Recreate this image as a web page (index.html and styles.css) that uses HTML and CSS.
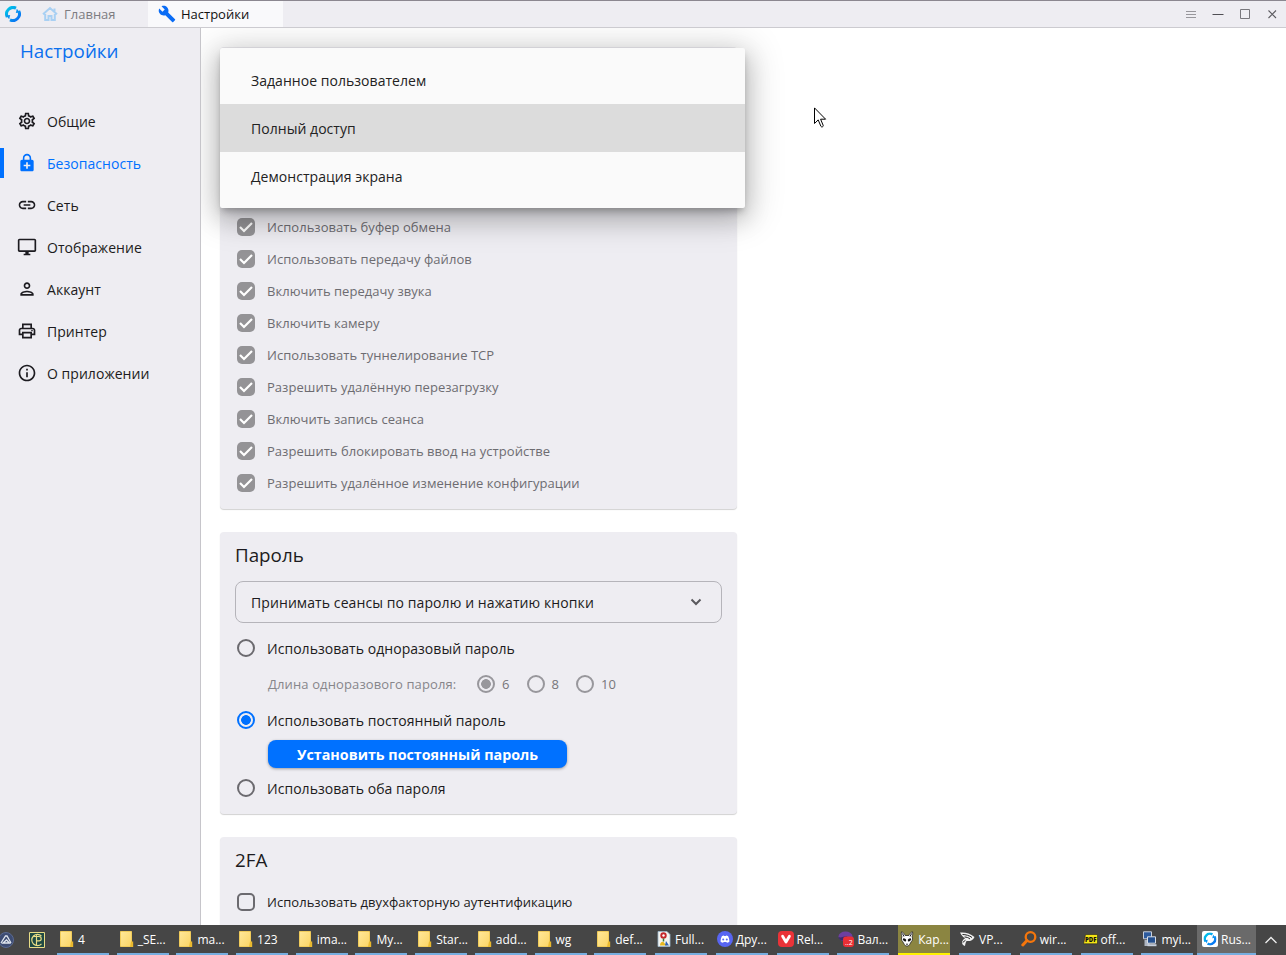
FILE: index.html
```
<!DOCTYPE html>
<html lang="ru">
<head>
    <meta charset="UTF-8">
    <meta name="viewport" content="width=device-width, initial-scale=1.0">
    <title>Настройки</title>
    <link rel="stylesheet" href="styles.css">
</head>
<body>
    <svg class="defs">
        <defs>
            <linearGradient id="logoFill" x1="0" y1="0" x2="1" y2="1">
                <stop offset="0" stop-color="#00c8e8"/>
                <stop offset="1" stop-color="#0a6cf5"/>
            </linearGradient>
            <linearGradient id="folderFill" x1="0" y1="0" x2="1" y2="1">
                <stop offset="0" stop-color="#ffe89a"/>
                <stop offset="1" stop-color="#fbd565"/>
            </linearGradient>
            <symbol id="logo" viewBox="0 0 16 16">
                <path d="M11 2.200A6.500 6.500 0 0 0 2.300 11M5 13.800A6.500 6.500 0 0 0 13.700 5" fill="none" stroke="url(#logoFill)" stroke-width="3"/>
                <path d="M1 9.500l4.200-.6-1 4.300zM15 6.500l-4.200.6 1-4.300z" fill="#0c94f2"/>
            </symbol>
            <symbol id="folder" viewBox="0 0 14 16">
                <path d="M.5.5h11v15H.5z" fill="url(#folderFill)" stroke="#f0cb5a"/>
                <path d="M11 10.500h2.200V16H10z" fill="#e9b92f"/>
            </symbol>
            <symbol id="check" viewBox="0 0 18 18">
                <path d="M3 9l4 4 8-8" fill="none" stroke="#fff" stroke-width="2.200"/>
            </symbol>
        </defs>
    </svg>

    <div class="titlebar">
        <svg class="app-logo"><use href="#logo"/></svg>
        <div class="tab tab-home">
            <svg viewBox="0 0 16 16" width="16" height="16"><path d="M1 8.300L8 2l7 6.300M12.500 2.500V6M3.200 8v6h3.300v-4h3v4h3.300V8" fill="none" stroke="#a9d0f3" stroke-width="2"/></svg>
            <span>Главная</span>
        </div>
        <div class="tab tab-active">
            <svg viewBox="0 0 24 24" width="18" height="18"><path fill="#0a6cf5" d="M22.7 19l-9.1-9.1c.9-2.3.4-5-1.5-6.9-2-2-5-2.4-7.4-1.3L9 6 6 9 1.6 4.7C.4 7.1.9 10.1 2.9 12.1c1.9 1.9 4.6 2.4 6.9 1.5l9.1 9.1c.4.4 1 .4 1.4 0l2.3-2.3c.5-.4.5-1.1.1-1.4z"/></svg>
            <span>Настройки</span>
        </div>
        <div class="window-buttons">
            <svg viewBox="0 0 12 12"><path d="M1 3.500h10M1 6.500h10M1 9.500h10" stroke="#98979c"/></svg>
            <svg viewBox="0 0 12 12"><path d="M.5 6.500h11" stroke="#504f54"/></svg>
            <svg viewBox="0 0 12 12"><path d="M1.500 1.500h9v9h-9z" fill="none" stroke="#78777c"/></svg>
            <svg viewBox="0 0 12 12"><path d="M2.500 2.500l7.500 7.500M10 2.500L2.500 10" stroke="#5c5b60" stroke-width="1.100"/></svg>
        </div>
    </div>

    <div class="window">
        <div class="sidebar">
            <h1>Настройки</h1>
            <div class="nav">
                <div class="nav-item">
                    <svg viewBox="0 0 24 24"><path d="M19.43 12.98c.04-.32.07-.64.07-.98 0-.34-.03-.66-.07-.98l2.11-1.65c.19-.15.24-.42.12-.64l-2-3.46c-.09-.16-.26-.25-.44-.25-.06 0-.12.01-.17.03l-2.49 1c-.52-.4-1.08-.73-1.69-.98l-.38-2.65C14.46 2.18 14.25 2 14 2h-4c-.25 0-.46.18-.49.42l-.38 2.65c-.61.25-1.17.59-1.69.98l-2.49-1c-.06-.02-.12-.03-.18-.03-.17 0-.34.09-.43.25l-2 3.46c-.13.22-.07.49.12.64l2.11 1.65c-.04.32-.07.65-.07.98 0 .33.03.66.07.98l-2.11 1.65c-.19.15-.24.42-.12.64l2 3.46c.09.16.26.25.44.25.06 0 .12-.01.17-.03l2.49-1c.52.4 1.08.73 1.69.98l.38 2.65c.03.24.24.42.49.42h4c.25 0 .46-.18.49-.42l.38-2.65c.61-.25 1.17-.59 1.69-.98l2.49 1c.06.02.12.03.18.03.17 0 .34-.09.43-.25l2-3.46c.12-.22.07-.49-.12-.64l-2.11-1.65zm-1.98-1.71c.04.31.05.52.05.73 0 .21-.02.43-.05.73l-.14 1.13.89.7 1.08.84-.7 1.21-1.27-.51-1.04-.42-.9.68c-.43.32-.84.56-1.25.73l-1.06.43-.16 1.13-.2 1.35h-1.4l-.19-1.35-.16-1.13-1.06-.43c-.43-.18-.83-.41-1.23-.71l-.91-.7-1.06.43-1.27.51-.7-1.21 1.08-.84.89-.7-.14-1.13c-.03-.31-.05-.54-.05-.74s.02-.43.05-.73l.14-1.13-.89-.7-1.08-.84.7-1.21 1.27.51 1.04.42.9-.68c.43-.32.84-.56 1.25-.73l1.06-.43.16-1.13.2-1.35h1.39l.19 1.35.16 1.13 1.06.43c.43.18.83.41 1.23.71l.91.7 1.06-.43 1.27-.51.7 1.21-1.07.85-.89.7.14 1.13zM12 8c-2.21 0-4 1.79-4 4s1.79 4 4 4 4-1.79 4-4-1.79-4-4-4zm0 6c-1.1 0-2-.9-2-2s.9-2 2-2 2 .9 2 2-.9 2-2 2z"/></svg>
                    <span>Общие</span>
                </div>
                <div class="nav-item selected">
                    <svg viewBox="0 0 24 24"><path d="M18 8h-1V6c0-2.76-2.24-5-5-5S7 3.24 7 6v2H6c-1.1 0-2 .9-2 2v10c0 1.1.9 2 2 2h12c1.1 0 2-.9 2-2V10c0-1.1-.9-2-2-2zM8.9 6c0-1.71 1.39-3.1 3.1-3.1s3.1 1.39 3.1 3.1v2H8.9V6zM16 16h-3v3h-2v-3H8v-2h3v-3h2v3h3v2z"/></svg>
                    <span>Безопасность</span>
                </div>
                <div class="nav-item">
                    <svg viewBox="0 0 24 24"><path d="M3.9 12c0-1.71 1.39-3.1 3.1-3.1h4V7H7c-2.76 0-5 2.24-5 5s2.24 5 5 5h4v-1.9H7c-1.71 0-3.1-1.39-3.1-3.1zM8 13h8v-2H8v2zm9-6h-4v1.9h4c1.71 0 3.1 1.39 3.1 3.1s-1.39 3.1-3.1 3.1h-4V17h4c2.76 0 5-2.24 5-5s-2.24-5-5-5z"/></svg>
                    <span>Сеть</span>
                </div>
                <div class="nav-item">
                    <svg viewBox="0 0 24 24"><path d="M21 2H3c-1.1 0-2 .9-2 2v12c0 1.1.9 2 2 2h7v2H8v2h8v-2h-2v-2h7c1.1 0 2-.9 2-2V4c0-1.1-.9-2-2-2zm0 14H3V4h18v12z"/></svg>
                    <span>Отображение</span>
                </div>
                <div class="nav-item">
                    <svg viewBox="0 0 24 24"><path d="M12 6c1.1 0 2 .9 2 2s-.9 2-2 2-2-.9-2-2 .9-2 2-2m0 10c2.7 0 5.8 1.29 6 2H6c.23-.72 3.31-2 6-2m0-12C9.79 4 8 5.79 8 8s1.79 4 4 4 4-1.79 4-4-1.79-4-4-4zm0 10c-2.67 0-8 1.34-8 4v2h16v-2c0-2.66-5.33-4-8-4z"/></svg>
                    <span>Аккаунт</span>
                </div>
                <div class="nav-item">
                    <svg viewBox="0 0 24 24"><path d="M19 8h-1V3H6v5H5c-1.66 0-3 1.34-3 3v6h4v4h12v-4h4v-6c0-1.66-1.34-3-3-3zM8 5h8v3H8V5zm8 12v2H8v-4h8v2zm2-2v-2H6v2H4v-4c0-.55.45-1 1-1h14c.55 0 1 .45 1 1v4h-2z"/><circle cx="18" cy="11.5" r="1"/></svg>
                    <span>Принтер</span>
                </div>
                <div class="nav-item">
                    <svg viewBox="0 0 24 24"><path d="M11 7h2v2h-2zm0 4h2v6h-2zm1-9C6.48 2 2 6.48 2 12s4.48 10 10 10 10-4.48 10-10S17.52 2 12 2zm0 18c-4.41 0-8-3.59-8-8s3.59-8 8-8 8 3.59 8 8-3.59 8-8 8z"/></svg>
                    <span>О приложении</span>
                </div>
            </div>
        </div>

        <div class="content">
            <div class="card permissions">
                <div class="row disabled"><svg class="checkbox checked"><use href="#check"/></svg><span>Использовать буфер обмена</span></div>
                <div class="row disabled"><svg class="checkbox checked"><use href="#check"/></svg><span>Использовать передачу файлов</span></div>
                <div class="row disabled"><svg class="checkbox checked"><use href="#check"/></svg><span>Включить передачу звука</span></div>
                <div class="row disabled"><svg class="checkbox checked"><use href="#check"/></svg><span>Включить камеру</span></div>
                <div class="row disabled"><svg class="checkbox checked"><use href="#check"/></svg><span>Использовать туннелирование TCP</span></div>
                <div class="row disabled"><svg class="checkbox checked"><use href="#check"/></svg><span>Разрешить удалённую перезагрузку</span></div>
                <div class="row disabled"><svg class="checkbox checked"><use href="#check"/></svg><span>Включить запись сеанса</span></div>
                <div class="row disabled"><svg class="checkbox checked"><use href="#check"/></svg><span>Разрешить блокировать ввод на устройстве</span></div>
                <div class="row disabled"><svg class="checkbox checked"><use href="#check"/></svg><span>Разрешить удалённое изменение конфигурации</span></div>
            </div>

            <div class="card password">
                <h2>Пароль</h2>
                <div class="select">
                    <span>Принимать сеансы по паролю и нажатию кнопки</span>
                    <svg viewBox="0 0 12 12" width="12" height="12"><path d="M1.500 3.500L6 8l4.500-4.500" fill="none" stroke="#5a595e" stroke-width="2"/></svg>
                </div>
                <div class="radio-row"><i class="radio"></i><span>Использовать одноразовый пароль</span></div>
                <div class="radio-row length-row">
                    <span class="length-label">Длина одноразового пароля:</span>
                    <i class="radio on"></i><span>6</span>
                    <i class="radio"></i><span>8</span>
                    <i class="radio"></i><span>10</span>
                </div>
                <div class="radio-row"><i class="radio on"></i><span>Использовать постоянный пароль</span></div>
                <button class="set-password">Установить постоянный пароль</button>
                <div class="radio-row"><i class="radio"></i><span>Использовать оба пароля</span></div>
            </div>

            <div class="card two-factor">
                <h2>2FA</h2>
                <div class="row"><i class="checkbox"></i><span>Использовать двухфакторную аутентификацию</span></div>
            </div>

            <div class="dropdown">
                <div class="option">Заданное пользователем</div>
                <div class="option current">Полный доступ</div>
                <div class="option">Демонстрация экрана</div>
            </div>
        </div>
    </div>

    <div class="taskbar">
        <div class="pinned">
            <svg viewBox="0 0 16 16" width="16" height="16"><circle cx="8" cy="8" r="7.500" fill="#3d4c73" stroke="#5a6a92"/><path d="M3 11l4.500-7h1.500l4 7M5 11l3.500-3 3 3z" fill="none" stroke="#dfe5ee" stroke-width="1.300"/></svg>
            <svg viewBox="0 0 16 16" width="16" height="16"><path d="M.5.5h15v15H.5z" fill="#1f4a44" stroke="#e8dc86"/><path d="M12.500 4.200a5.600 5.600 0 1 0 0 7.600M7.500 2.500v11M4.500 4.500H10a2.200 2.200 0 0 1 0 4.400H7.500" fill="none" stroke="#e8dc86" stroke-width="1.200"/></svg>
        </div>
        <div class="tasks folders">
            <div class="task"><svg class="folder"><use href="#folder"/></svg><span>4</span></div>
            <div class="task"><svg class="folder"><use href="#folder"/></svg><span>_SE...</span></div>
            <div class="task"><svg class="folder"><use href="#folder"/></svg><span>ma...</span></div>
            <div class="task"><svg class="folder"><use href="#folder"/></svg><span>123</span></div>
            <div class="task"><svg class="folder"><use href="#folder"/></svg><span>ima...</span></div>
            <div class="task"><svg class="folder"><use href="#folder"/></svg><span>My...</span></div>
            <div class="task"><svg class="folder"><use href="#folder"/></svg><span>Star...</span></div>
            <div class="task"><svg class="folder"><use href="#folder"/></svg><span>add...</span></div>
            <div class="task"><svg class="folder"><use href="#folder"/></svg><span>wg</span></div>
            <div class="task"><svg class="folder"><use href="#folder"/></svg><span>def...</span></div>
        </div>
        <div class="tasks apps">
            <div class="task">
                <svg viewBox="0 0 16 16"><path d="M2 .5h9l3 3v12H2z" fill="#f4f4f0" stroke="#9db8cc" stroke-width=".8"/><circle cx="7.500" cy="4.500" r="3.200" fill="#c5282c"/><circle cx="7.500" cy="4.500" r="1.200" fill="#fff"/><path d="M7.500 7.500v3" stroke="#3a7a3a" stroke-width="1.500"/><path d="M4 14.500c0-4 3-4.500 4-3s2 2 3 3z" fill="#e8b920"/><path d="M10 10l3 4.500H9z" fill="#2c62b8"/></svg>
                <span>Full...</span>
            </div>
            <div class="task">
                <svg viewBox="0 0 16 16"><circle cx="8" cy="8" r="8" fill="#5865f2"/><path d="M3.600 10.800c0-2.400.6-4.300 1.400-5.700 1-.6 1.700-.7 1.900-.6l.3.6h1.600l.3-.6c.2-.1.900 0 1.900.6.8 1.400 1.400 3.300 1.400 5.700-.9.700-1.700 1-2.500 1l-.5-.9H6.600l-.5.9c-.8 0-1.600-.3-2.500-1z" fill="#fff"/><circle cx="6.200" cy="8.400" r="1" fill="#5865f2"/><circle cx="9.800" cy="8.400" r="1" fill="#5865f2"/></svg>
                <span>Дру...</span>
            </div>
            <div class="task">
                <svg viewBox="0 0 16 16"><rect width="16" height="16" rx="4" fill="#ea3338"/><path d="M4.600 5.200L8 11l3.400-5.800" fill="none" stroke="#fff" stroke-width="2.800" stroke-linecap="round" stroke-linejoin="round"/></svg>
                <span>Rel...</span>
            </div>
            <div class="task">
                <svg viewBox="0 0 16 16"><ellipse cx="7.500" cy="5.500" rx="7" ry="5" fill="#6d3fa0"/><path d="M.5 6c3 1.500 6-1.500 9-.5L6 9.500c-3 .5-5-1-5.500-3.500z" fill="#3a2a6c"/><rect x="5" y="5.500" width="11" height="10.500" rx="3" fill="#ea2f35"/><text x="7" y="14" class="badge-text">..2</text></svg>
                <span>Вал...</span>
            </div>
            <div class="task attention">
                <svg viewBox="0 0 16 16"><path d="M2.500.8c2 .6 3 2.200 3.600 3.700h3.800c.6-1.500 1.600-3.100 3.600-3.700.5 2 0 3.600-.4 5 .8 1.600.6 3.600-.7 4.700-1.200 1.500-1.900 4.700-4.400 4.700s-3.200-3.200-4.400-4.700C2.300 9.400 2.100 7.400 2.900 5.800 2.500 4.400 2 2.800 2.500.8z" fill="#fff" stroke="#222" stroke-width=".8"/><path d="M3.500 2.500l1.400 3M12.500 2.500l-1.400 3" stroke="#111"/><ellipse cx="5.500" cy="8.800" rx="1.900" ry="1.300" transform="rotate(35 5.500 8.800)" fill="#111"/><ellipse cx="10.500" cy="8.800" rx="1.900" ry="1.300" transform="rotate(-35 10.500 8.800)" fill="#111"/><path d="M6.800 12.800h2.400L8 14.300z" fill="#111"/></svg>
                <span>Кар...</span>
            </div>
            <div class="task">
                <svg viewBox="0 0 16 16"><path d="M0 1.500c5-.5 10 .5 14.500 4.500-1.500 3.500-5 4.500-7.500 4-1 0-1.500 2-2 5-1.500-.5-2.700-1.500-3-3 0-2 1-3.500 3-4.500C3 6 1.500 4.500 0 1.500z" fill="#f2f2f2"/><path d="M2.500 3.500c3 0 7 1 9.500 3M4.500 6c2 0 4 .7 5.500 2M2.700 11.500l2.800-2.300" fill="none" stroke="#222"/></svg>
                <span>VP...</span>
            </div>
            <div class="task">
                <svg viewBox="0 0 16 16"><circle cx="9.500" cy="6" r="4.800" fill="none" stroke="#f5760c" stroke-width="2.300"/><path d="M6 9.500L1.800 14" stroke="#f5760c" stroke-width="3" stroke-linecap="round"/></svg>
                <span>wir...</span>
            </div>
            <div class="task">
                <svg viewBox="0 0 16 16"><path d="M1.500 12.800L3.500 3.500h12v9.300z" fill="#f4e414" stroke="#222" stroke-width=".6"/><text x="3" y="10.800" class="pdf-text">PDF</text></svg>
                <span>off...</span>
            </div>
            <div class="task">
                <svg viewBox="0 0 16 16"><path d="M1.500.8h8v7h-8z" fill="#2d5b9e" stroke="#c8d0dc"/><path d="M2.500 9h5v6h-5z" fill="#aeb6c2"/><path d="M5.500 5.800h8v6.400h-8z" fill="#24508f" stroke="#d7dde6"/><path d="M5.500 14.200h9" stroke="#c8d0dc" stroke-width="2"/></svg>
                <span>myi...</span>
            </div>
        </div>
        <div class="task running">
            <svg viewBox="0 0 16 16"><rect width="16" height="16" rx="2" fill="#fff"/><use href="#logo" x="1.500" y="1.500" width="13" height="13"/></svg>
            <span>Rus...</span>
        </div>
        <svg class="tray-arrow" viewBox="0 0 14 14"><path d="M1.500 10L7 4.500l5.500 5.500" fill="none" stroke="#eee" stroke-width="1.300"/></svg>
    </div>

    <svg class="cursor" viewBox="0 0 13 22"><path d="M.5.9v15.600l3.700-3.600 2.700 6.400c.6 1.200 2.700.5 2.300-.9l-2.600-6.200h5z" fill="#fff" stroke="#000"/></svg>
</body>
</html>
```
FILE: styles.css
```
* {
    box-sizing: border-box;
}
body {
    margin: 0;
    width: 1286px;
    height: 955px;
    display: flex;
    flex-direction: column;
    overflow: hidden;
    font-family: "Open Sans", "Noto Sans", sans-serif;
    font-size: 14px;
    letter-spacing: 0.04px;
    color: #1c1b20;
    background-color: #fff;
}
svg {
    flex: none;
}
.defs {
    position: absolute;
    width: 0;
    height: 0;
}
.titlebar {
    flex: none;
    display: flex;
    align-items: stretch;
    height: 28px;
    background-color: #eeedf2;
    border-top: 1px solid #8b8790;
    border-bottom: 1px solid #cccbd0;
    font-size: 13px;
    letter-spacing: 0;
}
.app-logo {
    width: 16px;
    height: 16px;
    margin: 5px 0 0 5px;
}
.tab {
    display: flex;
    align-items: center;
}
.tab-home {
    width: 127px;
    padding-left: 21px;
    gap: 6px;
    color: #7d7c81;
}
.tab-active {
    width: 135px;
    padding-left: 10px;
    gap: 5px;
    color: #111;
    background-color: #f9f9fb;
}
.window-buttons {
    display: flex;
    align-items: center;
    gap: 15px;
    margin-left: auto;
    padding-right: 8px;
}
.window-buttons svg {
    width: 12px;
    height: 12px;
}
.window {
    flex: 1;
    display: flex;
    min-height: 0;
}
.sidebar {
    width: 201px;
    background-color: #eeedf2;
    border-right: 1px solid #c6c5ca;
}
h1 {
    margin: 0 0 32px;
    padding-left: 20px;
    height: 46px;
    line-height: 46px;
    font-size: 18.8px;
    font-weight: 400;
    letter-spacing: 0;
    color: #0a70ee;
}
.nav-item {
    display: flex;
    align-items: center;
    gap: 10px;
    height: 30px;
    margin-bottom: 12px;
    padding-left: 13px;
    border-left: 4px solid transparent;
}
.nav-item svg {
    width: 20px;
    height: 20px;
    fill: currentColor;
}
.selected {
    color: #0071ff;
    border-left-color: #0071ff;
}
.content {
    flex: 1;
    position: relative;
    overflow: hidden;
    padding: 19px 0 0 19px;
}
.card {
    width: 517px;
    margin-bottom: 23px;
    padding: 0 15px;
    border-radius: 4px;
    background-color: #eeedf2;
    box-shadow: 0 1px 1px rgba(0, 0, 0, 0.18);
}
.permissions {
    height: 462px;
    padding-top: 164px;
}
.password {
    height: 282px;
}
.two-factor {
    height: 120px;
}
h2 {
    margin: 0;
    height: 49px;
    line-height: 46px;
    font-size: 18.8px;
    font-weight: 400;
    letter-spacing: 0;
}
.row {
    display: flex;
    align-items: center;
    gap: 12px;
    height: 32px;
    padding-left: 2px;
    font-size: 13px;
}
.disabled {
    color: #6d6c71;
}
.checkbox {
    width: 18px;
    height: 18px;
    border: 2px solid #6b6a6f;
    border-radius: 5px;
}
.checked {
    border: none;
    background-color: #949396;
}
.select {
    display: flex;
    align-items: center;
    justify-content: space-between;
    height: 42px;
    margin-bottom: 7px;
    padding: 0 19px 0 15px;
    border: 1px solid #b5b4ba;
    border-radius: 8px;
    letter-spacing: 0.09px;
}
.radio-row {
    display: flex;
    align-items: center;
    gap: 12px;
    height: 36px;
    padding-left: 2px;
}
.radio {
    flex: none;
    width: 18px;
    height: 18px;
    border: 2px solid #6b6a6f;
    border-radius: 50%;
}
.radio.on {
    border-color: #0071ff;
    background: radial-gradient(circle, #0071ff 4.5px, transparent 5.2px);
}
.length-row {
    gap: 7px;
    padding-left: 33px;
    font-size: 13px;
    color: #77767b;
}
.length-row span {
    width: 17.5px;
}
.length-row .length-label {
    width: 202px;
    letter-spacing: 0.12px;
    color: #87868b;
}
.length-row .radio {
    border-color: #98979c;
}
.length-row .radio.on {
    background: radial-gradient(circle, #98979c 4.5px, transparent 5.2px);
}
.set-password {
    display: block;
    width: 299px;
    height: 28px;
    margin: 2px 0 2px 33px;
    padding: 1px 0 0;
    border: none;
    border-radius: 8px;
    background-color: #0071ff;
    box-shadow: 0 1px 3px rgba(0, 0, 0, 0.35);
    color: #fff;
    font-family: inherit;
    font-size: 14.3px;
    font-weight: 700;
    line-height: 28px;
}
/* opened list, lies over the first card */
.dropdown {
    position: absolute;
    left: 19px;
    top: 20px;
    width: 525px;
    height: 160px;
    padding: 8px 0;
    border-radius: 2px;
    background-color: #fafafa;
    box-shadow: 0 5px 7px -2px rgba(0, 0, 0, 0.25), 0 10px 24px 1px rgba(0, 0, 0, 0.18), 0 5px 36px 6px rgba(0, 0, 0, 0.16);
}
.option {
    height: 48px;
    padding-left: 31px;
    line-height: 50px;
    color: #222;
}
.current {
    background-color: #dcdcdc;
}
.taskbar {
    flex: none;
    display: flex;
    height: 30px;
    background-color: #464646;
    color: #fff;
    font-size: 12px;
    letter-spacing: 0;
}
.pinned {
    display: flex;
    align-items: center;
    gap: 15px;
    width: 57px;
    margin-left: -2px;
    margin-right: 2px;
}
.tasks {
    display: flex;
}
.folders {
    gap: 7.7px;
    width: 598px;
}
.apps {
    gap: 8.8px;
    width: 542px;
}
.task {
    flex: none;
    display: flex;
    align-items: center;
    width: 52px;
    padding-left: 3px;
    border-bottom: 2px solid #76aee0;
    white-space: nowrap;
}
.folder {
    width: 14px;
    height: 16px;
    margin-right: 4px;
}
.apps .task {
    padding-left: 1px;
}
.apps svg,
.running svg {
    width: 16px;
    height: 16px;
    margin-right: 3px;
}
.attention {
    background-color: #8b8541;
    border-bottom-color: #fff200;
}
.running {
    width: 59px;
    padding-left: 5px;
    background-color: #6a6a6a;
}
.badge-text {
    font-size: 7px;
    fill: #fff;
}
.pdf-text {
    font-size: 6px;
    font-weight: 800;
    fill: #111;
}
.tray-arrow {
    width: 14px;
    height: 14px;
    margin: 8px 0 0 8px;
}
.cursor {
    position: absolute;
    left: 814px;
    top: 107px;
    width: 13px;
    height: 22px;
}
```
